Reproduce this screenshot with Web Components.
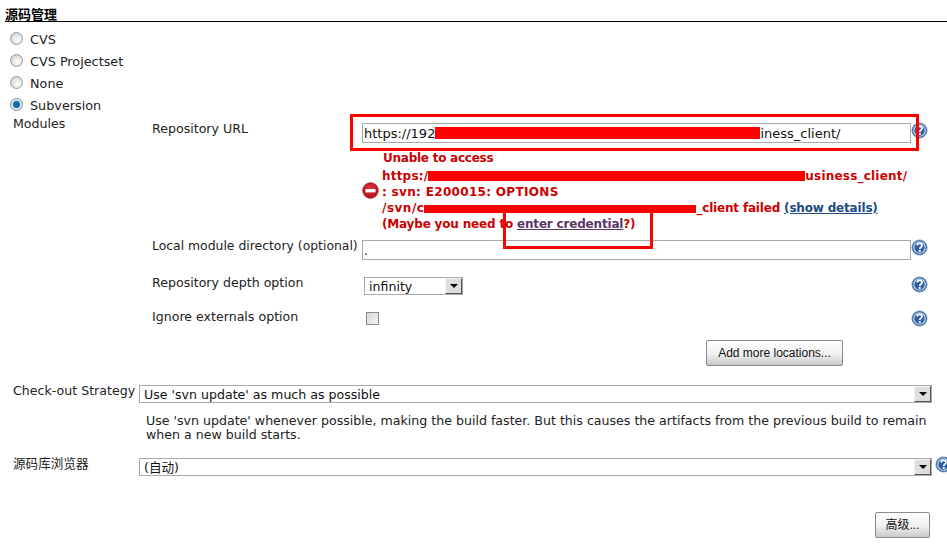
<!DOCTYPE html>
<html>
<head>
<meta charset="utf-8">
<style>
html, body { margin: 0; padding: 0; background: #fff; }
body {
    position: relative;
    width: 947px;
    height: 544px;
    overflow: hidden;
    font: 12.6px/16px "DejaVu Sans", "Noto Sans CJK SC", sans-serif;
    color: #222;
}
jk-radio { font-size: 12.8px; }
</style>
</head>
<body>
<jk-section heading="源码管理">
    <jk-radio>CVS</jk-radio>
    <jk-radio>CVS Projectset</jk-radio>
    <jk-radio>None</jk-radio>
    <jk-radio checked>Subversion</jk-radio>
</jk-section>

<jk-modules label="Modules" style="margin-top:-1px">
    <jk-row label="Repository URL" style="height:20px">
        <jk-input>https://192<jk-redact width="325" height="12" drop="1"></jk-redact>iness_client/</jk-input>
    </jk-row>
    <jk-error style="margin-top:7px"></jk-error>
    <jk-row label="Local module directory (optional)" style="margin-top:8px;height:20px;font-size:12.4px">
        <jk-input>.</jk-input>
    </jk-row>
    <jk-row label="Repository depth option" plain style="margin-top:17px;height:18px">
        <jk-select style="width:99px">infinity</jk-select>
    </jk-row>
    <jk-row label="Ignore externals option" plain style="margin-top:16px;height:18px">
        <jk-check></jk-check>
    </jk-row>
    <jk-actions style="margin-top:11px;padding-left:554px">
        <jk-button style="width:137px">Add more locations...</jk-button>
    </jk-actions>
</jk-modules>

<jk-option label="Check-out Strategy" style="margin-top:19px">
    <jk-select>Use 'svn update' as much as possible</jk-select>
    <jk-note slot="note">Use 'svn update' whenever possible, making the build faster. But this causes the artifacts from the previous build to remain when a new build starts.</jk-note>
</jk-option>
<jk-option label="源码库浏览器" help style="margin-top:16px">
    <jk-select>(自动)</jk-select>
</jk-option>
<jk-actions style="margin-top:36px;padding-left:875px">
    <jk-button style="width:55px">高级...</jk-button>
</jk-actions>

<jk-frame style="left:350px;top:114px;width:563px;height:31px"></jk-frame>
<jk-frame style="left:503px;top:210px;width:144px;height:33px"></jk-frame>

<script>
class JkSection extends HTMLElement {
    constructor() {
        super();
        this.attachShadow({mode: 'open'}).innerHTML = `
            <style>
                :host { display: block; padding-left: 5px; }
                h2 { margin: 0 0 7px; padding-top: 8px; height: 13px; font: bold 13px/13px "DejaVu Sans", "Noto Sans CJK SC", sans-serif;
                     color: #000; border-bottom: 1px solid #000; }
            </style>
            <h2>${this.getAttribute('heading')}</h2>
            <slot></slot>`;
    }
}

class JkRadio extends HTMLElement {
    constructor() {
        super();
        this.attachShadow({mode: 'open'}).innerHTML = `
            <style>
                :host { display: flex; align-items: center; height: 22px; padding-left: 5px; }
                i { box-sizing: border-box; width: 13px; height: 13px; margin: -4px 7px 0 0; border-radius: 50%;
                    border: 1px solid #9a9a9a; background: radial-gradient(circle at 60% 60%, #fff 0, #e6e6e6 45%, #c0c0c0 100%); }
                :host([checked]) i { background: radial-gradient(circle, #0b5c9c 0, #1a7cc0 42%, #dfe6ec 52%, #c8c8c8 100%); border-color: #8a96a0; }
            </style>
            <i></i><slot></slot>`;
    }
}

class JkModules extends HTMLElement {
    constructor() {
        super();
        this.attachShadow({mode: 'open'}).innerHTML = `
            <style>
                :host { display: grid; grid-template-columns: 152px 795px; }
                .label { padding-left: 13px; }
                .body { padding-top: 7px; }
            </style>
            <div class="label">${this.getAttribute('label')}</div>
            <div class="body"><slot></slot></div>`;
    }
}

class JkRow extends HTMLElement {
    constructor() {
        super();
        this.attachShadow({mode: 'open'}).innerHTML = `
            <style>
                :host { display: grid; grid-template-columns: 210px 549px 17px; align-items: start; }
                .label { margin-top: -2px; white-space: nowrap; }
                :host([plain]) .value { padding-left: 2px; }
                .help { margin-top: -1px; }
            </style>
            <div class="label">${this.getAttribute('label')}</div>
            <div class="value"><slot></slot></div>
            <div class="help"><jk-help></jk-help></div>`;
    }
}

class JkInput extends HTMLElement {
    constructor() {
        super();
        this.attachShadow({mode: 'open'}).innerHTML = `
            <style>
                :host { display: block; box-sizing: border-box; height: 20px; padding-left: 1px; border: 1px solid #a9a9a9;
                        font-size: 13px; line-height: 19px; white-space: nowrap; overflow: hidden; color: #111; }
            </style>
            <slot></slot>`;
    }
}

class JkRedact extends HTMLElement {
    constructor() {
        super();
        const w = this.getAttribute('width');
        const h = this.getAttribute('height');
        const drop = this.getAttribute('drop') || 0;
        this.attachShadow({mode: 'open'}).innerHTML = `
            <style>
                :host { display: inline-block; width: ${w}px; height: ${h}px; background: #f00; vertical-align: -${drop}px; }
            </style>`;
    }
}

class JkError extends HTMLElement {
    constructor() {
        super();
        this.attachShadow({mode: 'open'}).innerHTML = `
            <style>
                :host { display: grid; grid-template-columns: 210px 20px 1fr; font-size: 12px; letter-spacing: -0.25px;
                        font-weight: bold; color: #c00; white-space: nowrap; }
                svg { grid-column: 2; align-self: center; margin-top: -2px; }
                .text { grid-column: 3; }
                .first { padding-left: 1px; margin-bottom: 2px; }
                .url { letter-spacing: 0.2px; }
                .svn { letter-spacing: 0.32px; }
                .path { letter-spacing: 0.5px; }
                .tail { letter-spacing: -0.18px; }
                a { text-decoration: underline; }
                .show { color: #204a87; }
                .cred { color: #5c3566; }
            </style>
            <svg width="17" height="17" viewBox="0 0 17 17">
                <defs><radialGradient id="stop" cx="45%" cy="35%" r="70%">
                    <stop offset="0" stop-color="#e0323c"/><stop offset="1" stop-color="#a80f18"/>
                </radialGradient></defs>
                <circle cx="8.5" cy="8.5" r="7.8" fill="url(#stop)" stroke="#b5141d" stroke-width="0.8"/>
                <rect x="3.5" y="7" width="10" height="3.4" fill="#fff"/>
            </svg>
            <div class="text">
                <div class="first">Unable to access</div>
                <div class="url">https:/<jk-redact width="377" height="10" drop="1"></jk-redact>usiness_client/</div>
                <div class="svn">: svn: E200015: OPTIONS</div>
                <div class="tail"><span class="path">/svn/c</span><jk-redact width="272" height="8" drop="1"></jk-redact>_client failed <a class="show">(show details)</a></div>
                <div class="tail">(Maybe you need to <a class="cred">enter credential</a>?)</div>
            </div>`;
    }
}

class JkSelect extends HTMLElement {
    constructor() {
        super();
        this.attachShadow({mode: 'open'}).innerHTML = `
            <style>
                :host { display: flex; box-sizing: border-box; height: 18px; border: 1px solid #a9a9a9; line-height: 17px;
                        color: #111; white-space: nowrap; background: #fff; }
                .text { flex: 1; padding-left: 4px; overflow: hidden; }
                .btn { box-sizing: border-box; width: 17px; height: 16px; background: #dedede; border: 1px solid;
                       border-color: #f4f4f4 #555 #555 #f4f4f4; display: flex; align-items: center; justify-content: center; }
                .btn i { border: 4px solid transparent; border-top: 4px solid #000; border-bottom: 0; }
            </style>
            <div class="text"><slot></slot></div>
            <div class="btn"><i></i></div>`;
    }
}

class JkCheck extends HTMLElement {
    constructor() {
        super();
        this.attachShadow({mode: 'open'}).innerHTML = `
            <style>
                :host { display: block; box-sizing: border-box; width: 13px; height: 13px; margin: 1px 0 0 2px; border: 1px solid #8a8a8a;
                        background: linear-gradient(135deg, #d8d8d8, #f6f6f6); }
            </style>`;
    }
}

class JkHelp extends HTMLElement {
    constructor() {
        super();
        this.attachShadow({mode: 'open'}).innerHTML = `
            <style>
                :host { display: block; width: 17px; height: 17px; }
                svg { display: block; }
            </style>
            <svg width="17" height="17" viewBox="0 0 17 17">
                <circle cx="8.5" cy="8.5" r="7.6" fill="#3465a4" stroke="#6f93c2" stroke-width="0.8"/>
                <circle cx="8.5" cy="8.5" r="5.7" fill="#2f5f9f" stroke="#d5e1ef" stroke-width="1.1"/>
                <path d="M6.2 6.6c0-1.5 1.1-2.2 2.4-2.2s2.4.8 2.4 2c0 1.8-2.3 1.8-2.3 3.5" fill="none" stroke="#fff" stroke-width="1.7"/>
                <rect x="7.7" y="10.9" width="2" height="2" fill="#fff"/>
            </svg>`;
    }
}

class JkButton extends HTMLElement {
    constructor() {
        super();
        this.attachShadow({mode: 'open'}).innerHTML = `
            <style>
                :host { display: block; box-sizing: border-box; height: 26px; border: 1px solid #8a8a8a; border-radius: 2px;
                        background: linear-gradient(#fff, #f0f0f0 55%, #c9c9c9); text-align: center; line-height: 24px;
                        font-size: 12px; font-family: "Liberation Sans", "Noto Sans CJK SC", sans-serif; color: #111; }
            </style>
            <slot></slot>`;
    }
}

class JkActions extends HTMLElement {
    constructor() {
        super();
        this.attachShadow({mode: 'open'}).innerHTML = `
            <style>:host { display: block; }</style>
            <slot></slot>`;
    }
}

class JkOption extends HTMLElement {
    constructor() {
        super();
        const help = this.hasAttribute('help') ? '<div class="help"><jk-help></jk-help></div>' : '<div></div>';
        this.attachShadow({mode: 'open'}).innerHTML = `
            <style>
                :host { display: grid; grid-template-columns: 139px 793px 15px; align-items: start; }
                .label { padding-left: 13px; margin-top: -2px; white-space: nowrap; }
                .note { grid-column: 2 / 4; }
                .help { margin: -2px 0 0 -1px; padding-left: 4px; width: 17px; overflow: hidden; }
            </style>
            <div class="label">${this.getAttribute('label')}</div>
            <div><slot></slot></div>
            ${help}
            <div class="note"><slot name="note"></slot></div>`;
    }
}

class JkNote extends HTMLElement {
    constructor() {
        super();
        this.attachShadow({mode: 'open'}).innerHTML = `
            <style>
                :host { display: block; padding: 11px 0 0 7px; width: 795px; line-height: 14px; color: #222; }
            </style>
            <slot></slot>`;
    }
}

class JkFrame extends HTMLElement {
    constructor() {
        super();
        this.attachShadow({mode: 'open'}).innerHTML = `
            <style>
                :host { display: block; position: absolute; border: 3px solid #f00; }
            </style>`;
    }
}

customElements.define('jk-section', JkSection);
customElements.define('jk-radio', JkRadio);
customElements.define('jk-modules', JkModules);
customElements.define('jk-row', JkRow);
customElements.define('jk-input', JkInput);
customElements.define('jk-redact', JkRedact);
customElements.define('jk-error', JkError);
customElements.define('jk-select', JkSelect);
customElements.define('jk-check', JkCheck);
customElements.define('jk-help', JkHelp);
customElements.define('jk-button', JkButton);
customElements.define('jk-actions', JkActions);
customElements.define('jk-option', JkOption);
customElements.define('jk-note', JkNote);
customElements.define('jk-frame', JkFrame);
</script>
</body>
</html>
